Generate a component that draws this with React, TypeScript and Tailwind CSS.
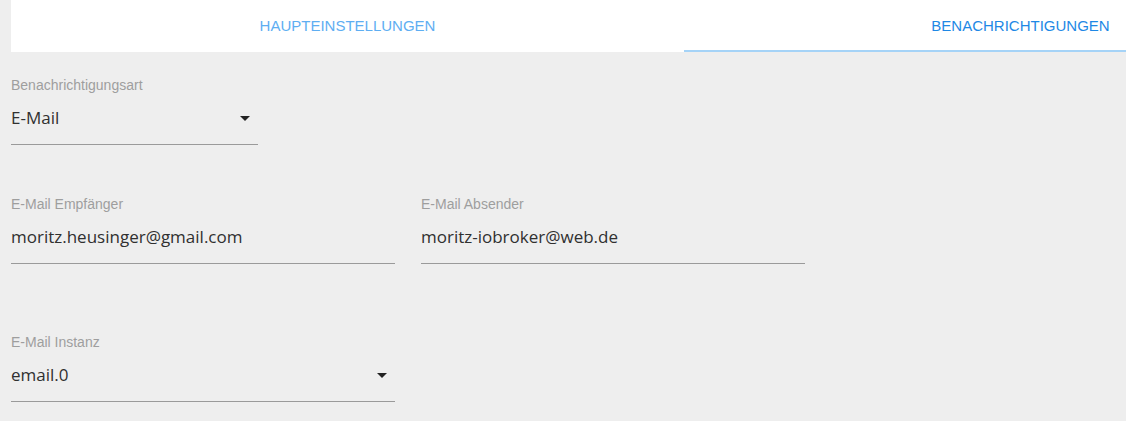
import React from "react";

function Arrow() {
  return (
    <svg width="10" height="5" viewBox="0 0 10 5" className="shrink-0">
      <path d="M0 0h10L5 5z" fill="#222" />
    </svg>
  );
}

interface FieldProps {
  label: string;
  value: string;
  width: string;
  select?: boolean;
}

function Field({ label, value, width, select }: FieldProps) {
  return (
    <div className={`${width} flex flex-col`}>
      <div className="h-4 text-[14px] leading-4 text-[#9e9e9e] font-['Liberation_Sans',Arial,sans-serif]">
        {label}
      </div>
      <div className="mt-[14px] flex h-[22px] items-center justify-between pr-[8px]">
        <span className="text-[17px] leading-[22px] text-[#303030] font-['Open_Sans','Noto_Sans',sans-serif]">
          {value}
        </span>
        {select && <Arrow />}
      </div>
      <div className="mt-[15px] h-px bg-[#9a9a9a]" />
    </div>
  );
}

export default function App() {
  return (
    <div className="h-[421px] w-full overflow-hidden bg-[#eeeeee] pl-[11px]">
      <div className="flex h-[52px] w-[1346px] bg-white text-[15px] font-['Liberation_Sans',Arial,sans-serif]">
        <div className="flex w-[673px] items-center justify-center text-[#5eaef2]">
          HAUPTEINSTELLUNGEN
        </div>
        <div className="relative flex w-[673px] items-center justify-center text-[#1e88e5]">
          BENACHRICHTIGUNGEN
          <div className="absolute bottom-0 left-0 right-0 h-[2px] bg-[#a5d3f7]" />
        </div>
      </div>

      <div className="flex flex-col pt-[25px]">
        <Field label="Benachrichtigungsart" value="E-Mail" width="w-[247px]" select />
        <div className="mt-[51px] flex gap-[26px]">
          <Field label="E-Mail Empfänger" value="moritz.heusinger@gmail.com" width="w-[384px]" />
          <Field label="E-Mail Absender" value="moritz-iobroker@web.de" width="w-[384px]" />
        </div>
        <div className="mt-[70px] flex">
          <Field label="E-Mail Instanz" value="email.0" width="w-[384px]" select />
        </div>
      </div>
    </div>
  );
}
